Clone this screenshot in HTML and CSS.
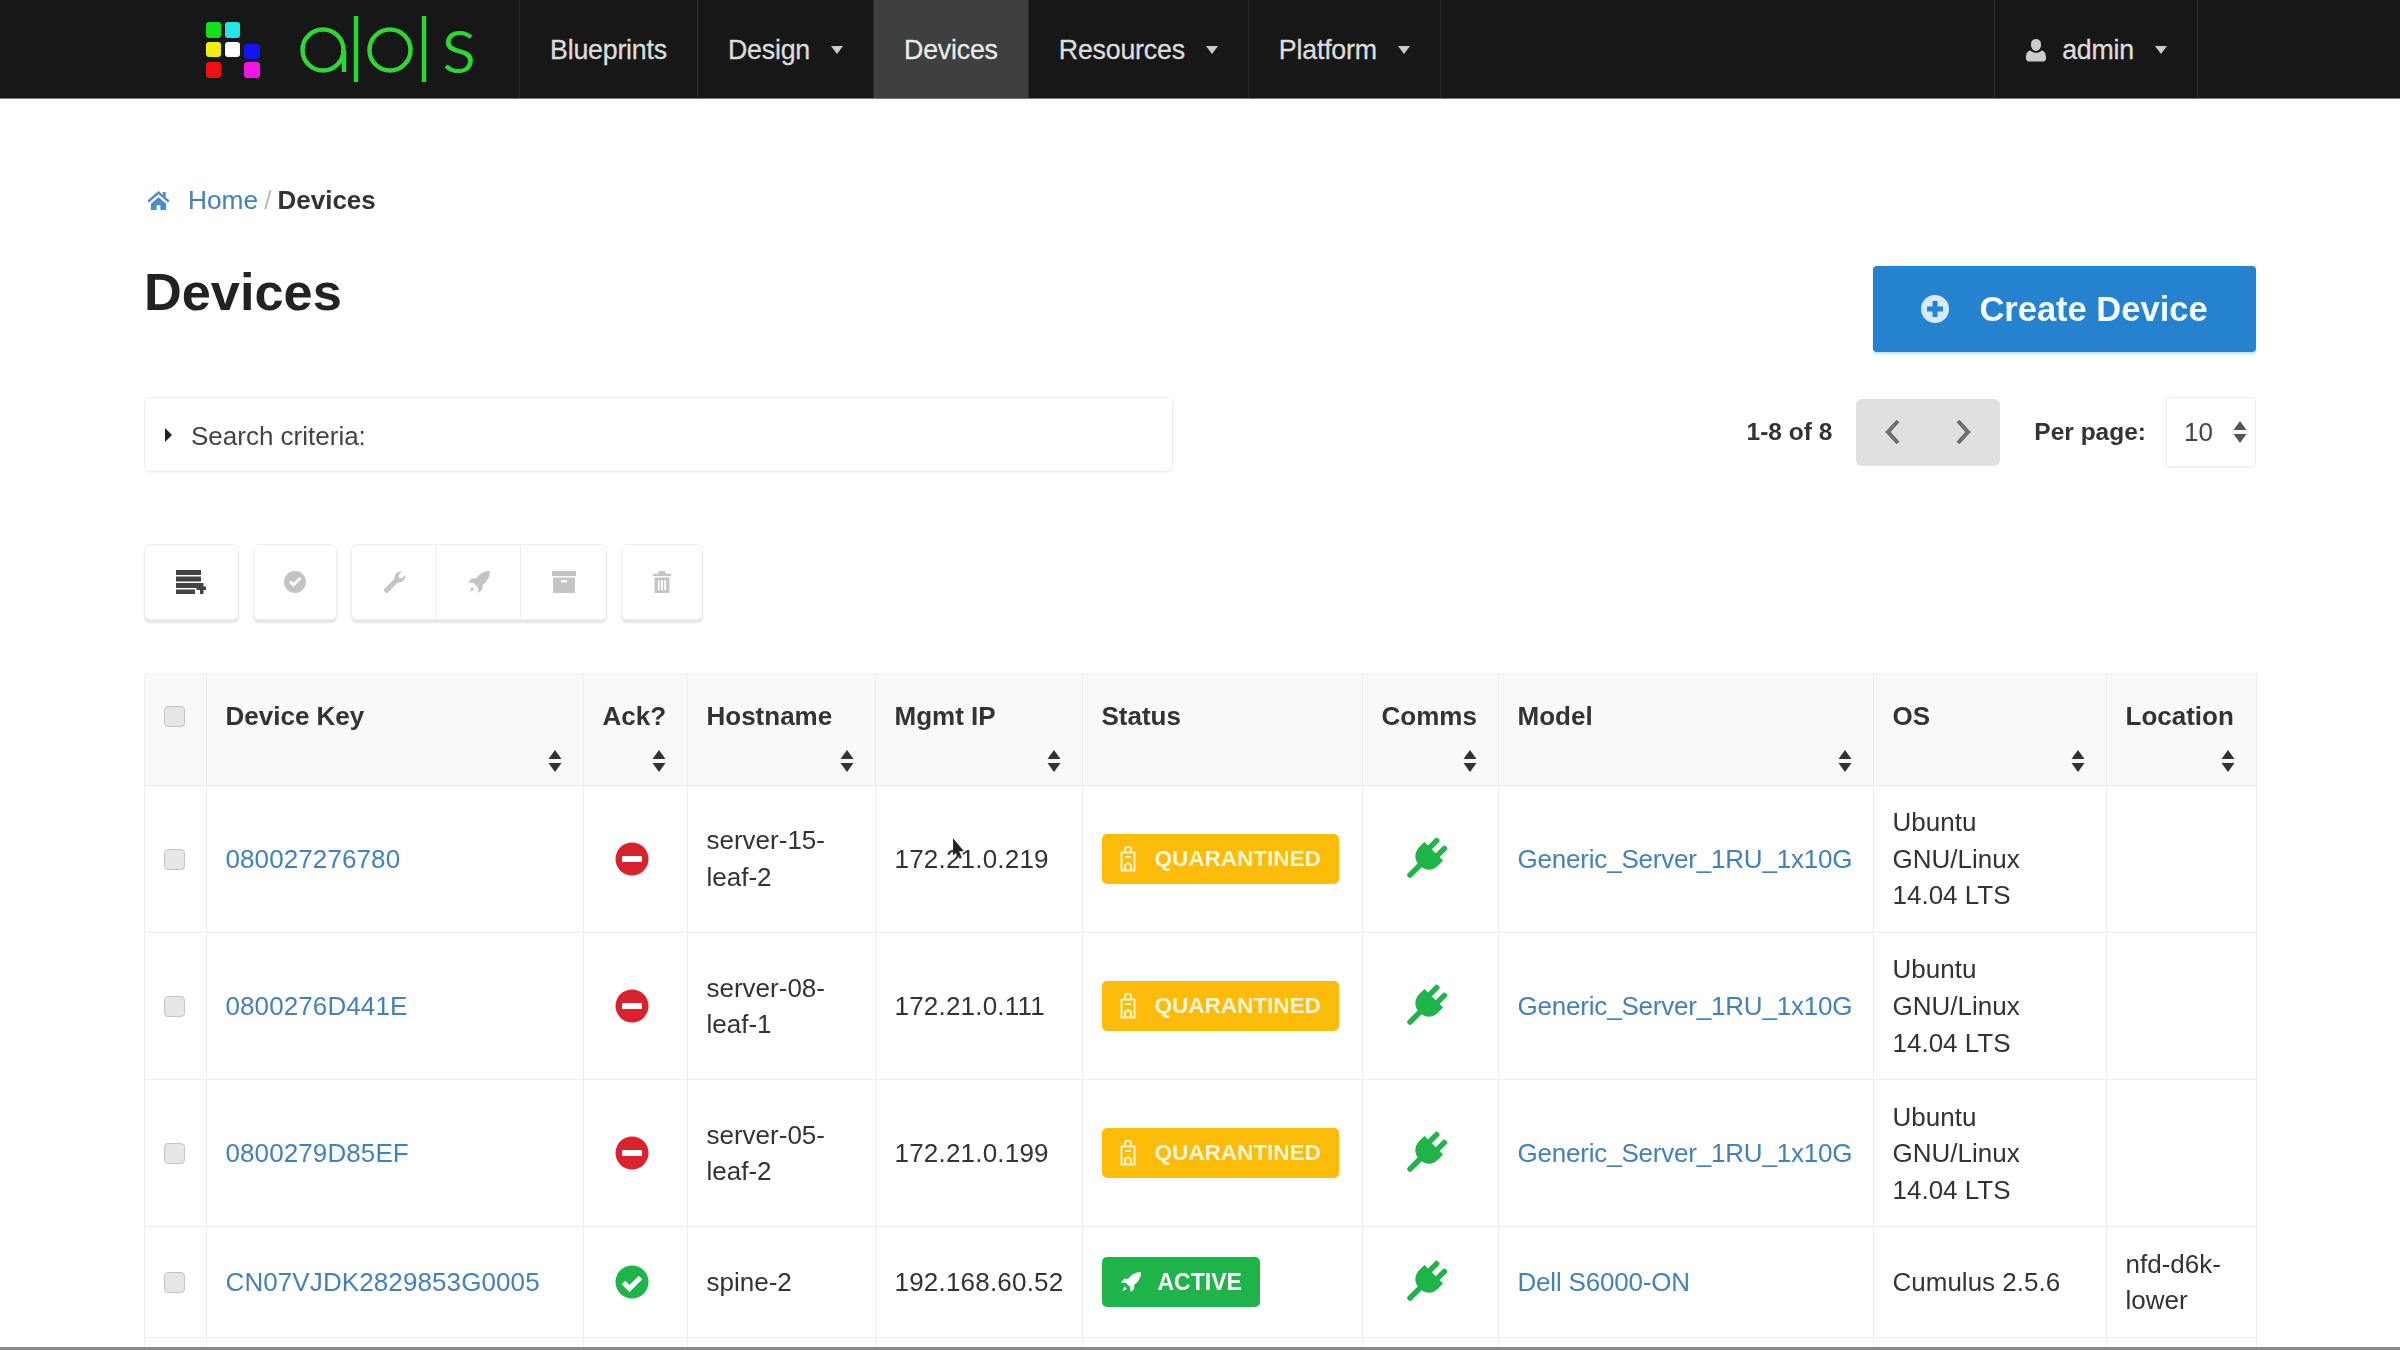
FILE: index.html
```html
<!DOCTYPE html>
<html lang="en">

<head>
  <meta charset="UTF-8">
  <title>Devices</title>
  <link rel="stylesheet" href="styles.css">
</head>

<body>
  <svg class="defs" width="0" height="0">
    <symbol id="i-sort" viewBox="0 0 14 22"><path d="M7 0l6.500 9H.5zM7 22L.5 13h13z"/></symbol>
    <symbol id="i-plug" viewBox="0 0 40 40">
      <g transform="rotate(45 20 20)">
        <rect x="12.500" y="-1" width="5" height="13" rx="2"/>
        <rect x="22.500" y="-1" width="5" height="13" rx="2"/>
        <path d="M8 10h24v6c0 7-4 11-9 12h-6c-5-1-9-5-9-12z"/>
        <rect x="17.500" y="26" width="5" height="17" rx="2"/>
      </g>
    </symbol>
    <symbol id="i-stop" viewBox="0 0 34 34">
      <circle cx="17" cy="17" r="16.500" fill="#d8232f"/>
      <rect x="7" y="14" width="20" height="6" rx="1" fill="#fff"/>
    </symbol>
    <symbol id="i-ok" viewBox="0 0 34 34">
      <circle cx="17" cy="17" r="16.500" fill="#1fb44a"/>
      <path d="M8.500 17.500l6 6 11-11" fill="none" stroke="#fff" stroke-width="5"/>
    </symbol>
    <symbol id="i-box" viewBox="0 0 16 26">
      <path d="M5 6V3.500a3 3 0 0 1 6 0V6M1.500 6.500h13v18h-13zM5 24v-5l3-2 3 2v5M5 11h6" fill="none" stroke="#fff4cf" stroke-width="2"/>
    </symbol>
    <symbol id="i-rocket" viewBox="0 0 24 24">
      <path d="M23 1c-6.500.2-11 3-14 7.500H4.500L1 12.500l5.500.5 4.500 4.500.5 5.500 4-3.500v-4.500C20 12 22.800 7.500 23 1zM5 17l2.500 2.500L2.500 22z"/>
    </symbol>
  </svg>

  <div class="screen">
    <nav class="navbar">
      <a class="logo">
        <svg width="240" height="98" viewBox="200 0 240 98">
          <rect x="206" y="22" width="15" height="16" rx="3" fill="#12e01a"/>
          <rect x="225" y="22" width="15" height="16" rx="3" fill="#22e6ea"/>
          <rect x="206" y="42" width="15" height="15" rx="3" fill="#f2ee10"/>
          <rect x="225" y="42" width="15" height="15" rx="3" fill="#fff"/>
          <rect x="244" y="44" width="16" height="15" rx="3" fill="#1414f0"/>
          <rect x="206" y="62" width="15" height="16" rx="3" fill="#f01010"/>
          <rect x="244" y="62" width="16" height="16" rx="3" fill="#ee18e0"/>
          <g fill="none" stroke="#2dd834" stroke-width="4.500">
            <circle cx="323" cy="50" r="20.500"/>
            <line x1="344" y1="50" x2="344" y2="72"/>
            <line x1="356" y1="16" x2="356" y2="82"/>
            <circle cx="390" cy="50" r="20.500"/>
            <line x1="424" y1="16" x2="424" y2="82"/>
          </g>
        </svg>
        <span class="logo-s">s</span>
      </a>
      <ul class="nav-list">
        <li class="nav-item">Blueprints</li>
        <li class="nav-item">Design<span class="caret"></span></li>
        <li class="nav-item active">Devices</li>
        <li class="nav-item">Resources<span class="caret"></span></li>
        <li class="nav-item">Platform<span class="caret"></span></li>
      </ul>
      <ul class="nav-list nav-right">
        <li class="nav-item">
          <svg class="user-icon" viewBox="0 0 24 26"><path d="M12 1c3.500 0 5.500 2.500 5.500 6s-2 7-5.500 7-5.500-3.500-5.500-7S8.500 1 12 1zM6 13.500c1.500 1.500 3.500 2.500 6 2.500s4.500-1 6-2.500c3.500.5 5 3.500 5 8.500 0 2-1.500 3.500-3 3.500H4c-1.500 0-3-1.500-3-3.500 0-5 1.500-8 5-8.500z"/></svg>
          admin<span class="caret"></span>
        </li>
      </ul>
    </nav>

    <main class="page">
      <div class="breadcrumb">
        <svg class="home-icon" viewBox="0 0 24 22"><path d="M12 1L.5 11l1.500 2L12 4.500 22 13l1.500-2L19.500 7.500V2h-3v3zM4 14.500L12 7.500l8 7V21h-6v-5h-4v5H4z"/></svg>
        <a class="link" href="#">Home</a>
        <span class="sep">/</span>
        <b>Devices</b>
      </div>

      <div class="title-row">
        <h1>Devices</h1>
        <button class="create-btn">
          <svg class="plus-icon" viewBox="0 0 28 28"><path fill-rule="evenodd" d="M14 0a14 14 0 1 1 0 28 14 14 0 0 1 0-28zM11.500 6v5.500H6v5h5.500V22h5v-5.500H22v-5h-5.500V6z"/></svg>
          Create Device
        </button>
      </div>

      <div class="filter-row">
        <div class="search-box"><span class="arrow-right"></span>Search criteria:</div>
        <div class="pager">
          <span class="pager-total">1-8 of 8</span>
          <div class="pager-btns">
            <svg class="chevron" viewBox="0 0 16 26"><path d="M13 2L3 13l10 11"/></svg>
            <svg class="chevron" viewBox="0 0 16 26"><path d="M3 2l10 11L3 24"/></svg>
          </div>
          <span class="pager-label">Per page:</span>
          <div class="per-page">10<svg class="sort sort-dark"><use href="#i-sort"/></svg></div>
        </div>
      </div>

      <div class="toolbar">
        <button class="tool-btn w95 on">
          <svg viewBox="0 0 30 24"><path d="M0 0h25v5H0zM0 6.500h25v5H0zM0 13h25v5H0zM0 19.500h19V24H0zM24 13h3.500v3.500H31V20h-3.500v4H24v-4h-3.500v-3.500H24z"/></svg>
        </button>
        <button class="tool-btn w84">
          <svg viewBox="0 0 24 24"><path fill-rule="evenodd" d="M12 1a11 11 0 1 1 0 22 11 11 0 0 1 0-22zM6 12.500l4.500 4.500L18.500 9l-2-2-6 6-2.500-2.500z"/></svg>
        </button>
        <div class="tool-group">
          <button class="tool-btn w85">
            <svg viewBox="0 0 24 24"><path d="M2.500 18.500l10-9.800C12 4.800 15 1 20 1.500L16.500 5l.5 2.800 2.800.5L23.300 5c.5 4.500-3 8-7.300 7.300L6 22.500c-2 2-5.500-2-3.500-4z"/></svg>
          </button>
          <button class="tool-btn w84">
            <svg><use href="#i-rocket"/></svg>
          </button>
          <button class="tool-btn w87">
            <svg viewBox="0 0 24 24"><path fill-rule="evenodd" d="M0 1h24v5H0zM1 7.500h22V23H1zM9 10v2.500h6V10z"/></svg>
          </button>
        </div>
        <button class="tool-btn w82">
          <svg viewBox="0 0 24 26"><path fill-rule="evenodd" d="M9 1h6l1.500 3H22v2.500H2V4h5.500zM4 8h16v17H4zM7.500 11v11h2V11zM11 11v11h2V11zM14.500 11v11h2V11z"/></svg>
        </button>
      </div>

      <table class="devices">
        <colgroup>
          <col class="c-check"><col class="c-key"><col class="c-ack"><col class="c-host"><col class="c-ip">
          <col class="c-status"><col class="c-comms"><col class="c-model"><col class="c-os"><col class="c-loc">
        </colgroup>
        <thead>
          <tr>
            <th class="check-cell"><span class="checkbox"></span></th>
            <th>Device Key<div class="sort-wrap"><svg class="sort"><use href="#i-sort"/></svg></div></th>
            <th>Ack?<div class="sort-wrap"><svg class="sort"><use href="#i-sort"/></svg></div></th>
            <th>Hostname<div class="sort-wrap"><svg class="sort"><use href="#i-sort"/></svg></div></th>
            <th>Mgmt IP<div class="sort-wrap"><svg class="sort"><use href="#i-sort"/></svg></div></th>
            <th>Status</th>
            <th>Comms<div class="sort-wrap"><svg class="sort"><use href="#i-sort"/></svg></div></th>
            <th>Model<div class="sort-wrap"><svg class="sort"><use href="#i-sort"/></svg></div></th>
            <th>OS<div class="sort-wrap"><svg class="sort"><use href="#i-sort"/></svg></div></th>
            <th>Location<div class="sort-wrap"><svg class="sort"><use href="#i-sort"/></svg></div></th>
          </tr>
        </thead>
        <tbody>
          <tr>
            <td class="check-cell"><span class="checkbox"></span></td>
            <td class="num"><a class="link" href="#">080027276780</a></td>
            <td class="ack-cell"><svg class="ack"><use href="#i-stop"/></svg></td>
            <td>server-15-leaf-2</td>
            <td class="num">172.21.0.219</td>
            <td><span class="badge quarantined"><svg class="badge-box"><use href="#i-box"/></svg>QUARANTINED</span></td>
            <td class="comms-cell"><svg class="plug"><use href="#i-plug"/></svg></td>
            <td class="model"><a class="link" href="#">Generic_Server_1RU_1x10G</a></td>
            <td>Ubuntu GNU/Linux 14.04 LTS</td>
            <td></td>
          </tr>
          <tr>
            <td class="check-cell"><span class="checkbox"></span></td>
            <td class="num"><a class="link" href="#">0800276D441E</a></td>
            <td class="ack-cell"><svg class="ack"><use href="#i-stop"/></svg></td>
            <td>server-08-leaf-1</td>
            <td class="num">172.21.0.111</td>
            <td><span class="badge quarantined"><svg class="badge-box"><use href="#i-box"/></svg>QUARANTINED</span></td>
            <td class="comms-cell"><svg class="plug"><use href="#i-plug"/></svg></td>
            <td class="model"><a class="link" href="#">Generic_Server_1RU_1x10G</a></td>
            <td>Ubuntu GNU/Linux 14.04 LTS</td>
            <td></td>
          </tr>
          <tr>
            <td class="check-cell"><span class="checkbox"></span></td>
            <td class="num"><a class="link" href="#">0800279D85EF</a></td>
            <td class="ack-cell"><svg class="ack"><use href="#i-stop"/></svg></td>
            <td>server-05-leaf-2</td>
            <td class="num">172.21.0.199</td>
            <td><span class="badge quarantined"><svg class="badge-box"><use href="#i-box"/></svg>QUARANTINED</span></td>
            <td class="comms-cell"><svg class="plug"><use href="#i-plug"/></svg></td>
            <td class="model"><a class="link" href="#">Generic_Server_1RU_1x10G</a></td>
            <td>Ubuntu GNU/Linux 14.04 LTS</td>
            <td></td>
          </tr>
          <tr>
            <td class="check-cell"><span class="checkbox"></span></td>
            <td class="num"><a class="link" href="#">CN07VJDK2829853G0005</a></td>
            <td class="ack-cell"><svg class="ack"><use href="#i-ok"/></svg></td>
            <td>spine-2</td>
            <td class="num">192.168.60.52</td>
            <td><span class="badge active-badge"><svg class="badge-rocket"><use href="#i-rocket"/></svg>ACTIVE</span></td>
            <td class="comms-cell"><svg class="plug"><use href="#i-plug"/></svg></td>
            <td class="model"><a class="link" href="#">Dell S6000-ON</a></td>
            <td>Cumulus 2.5.6</td>
            <td>nfd-d6k-lower</td>
          </tr>
          <tr class="next-row">
            <td></td><td></td><td></td><td></td><td></td><td></td><td></td><td></td><td></td><td></td>
          </tr>
        </tbody>
      </table>
    </main>

    <!-- mouse pointer caught in the capture -->
    <svg class="pointer" viewBox="0 0 12 20"><path d="M1 0l10 12H6.500l2.500 6-2 1-2.500-6L1 16z"/></svg>
    <div class="bottom-edge"></div>
  </div>
</body>

</html>
```
FILE: styles.css
```css
html,
body {
  margin: 0;
  padding: 0;
  height: 1350px;
  overflow: hidden;
  background: #fff;
}

body {
  font-family: "Liberation Sans", Arial, sans-serif;
  font-size: 26px;
  line-height: 36.6px;
  color: #333;
}

.defs {
  position: absolute;
}

/* the reference is a soft video frame */
.screen {
  position: relative;
  height: 1350px;
  overflow: hidden;
  filter: blur(0.7px);
}

.link {
  color: #4480ba;
  text-decoration: none;
}

/* navbar */
.navbar {
  display: flex;
  height: 98px;
  background: #171717;
  border-bottom: 1px solid #777;
}

.logo {
  display: flex;
  box-sizing: border-box;
  width: 319px;
  margin-left: 200px;
  height: 98px;
}

.logo-s {
  height: 82px;
  padding-left: 2px;
  font-family: Lato, sans-serif;
  font-weight: 300;
  font-size: 80px;
  line-height: 82px;
  color: #2dd834;
  -webkit-text-stroke: 1.2px #2dd834;
}

.nav-list {
  display: flex;
  margin: 0;
  padding: 0;
  list-style: none;
  border-left: 1px solid #2b2b2b;
}

.nav-right {
  margin-left: auto;
  margin-right: 202px;
}

.nav-item {
  display: flex;
  align-items: center;
  padding: 2px 30px 0;
  color: #ddd;
  font-size: 26.750px;
  letter-spacing: -0.2px;
  -webkit-text-stroke: 0.3px #ddd;
  border-right: 1px solid #2b2b2b;
}

.nav-item.active {
  background: #3e3f3f;
  color: #eee;
}

.caret {
  margin-left: 21px;
  border-top: 8px solid #ccc;
  border-left: 6px solid transparent;
  border-right: 6px solid transparent;
}

.user-icon {
  width: 22px;
  height: 24px;
  margin-right: 15px;
  fill: #ccc;
}

/* page */
.page {
  padding: 83px 144px 0;
}

.breadcrumb {
  display: flex;
  align-items: center;
  height: 36px;
  font-size: 26.300px;
}

.breadcrumb b {
  color: #333;
  font-size: 26px;
}

.home-icon {
  width: 23px;
  height: 21px;
  margin: 0 18px 0 3px;
  fill: #4a8bc9;
}

.sep {
  margin: 0 6px;
  color: #bbb;
}

.title-row {
  display: flex;
  justify-content: space-between;
  margin-top: 45px;
}

h1 {
  margin: 0;
  font-size: 52.300px;
  line-height: 58px;
  color: #222;
}

.create-btn {
  display: flex;
  align-items: center;
  justify-content: center;
  box-sizing: border-box;
  width: 383px;
  height: 86px;
  margin-top: 3px;
  padding: 0;
  border: none;
  border-radius: 4px;
  background: #2482cf;
  box-shadow: 0 2px 2px rgba(120, 200, 255, 0.5);
  color: #f4faff;
  font-family: inherit;
  font-size: 34.500px;
  font-weight: bold;
}

.plus-icon {
  width: 28px;
  height: 28px;
  margin-right: 30px;
  fill: #d5ebfb;
}

.filter-row {
  display: flex;
  justify-content: space-between;
  margin-top: 45px;
}

.search-box {
  display: flex;
  align-items: center;
  box-sizing: border-box;
  width: 1029px;
  height: 75px;
  padding: 4px 0 0 20px;
  border: 1px solid #eee;
  border-radius: 6px;
  box-shadow: 0 1px 2px rgba(0, 0, 0, 0.04);
  color: #444;
}

.arrow-right {
  margin: -4px 19px 0 0;
  border-left: 7px solid #222;
  border-top: 7px solid transparent;
  border-bottom: 7px solid transparent;
}

.pager {
  display: flex;
  align-items: center;
  height: 70px;
  font-size: 24.500px;
  font-weight: bold;
}

.pager-btns {
  display: flex;
  justify-content: space-between;
  align-items: center;
  box-sizing: border-box;
  width: 144px;
  height: 67px;
  margin: 0 34px 0 24px;
  padding: 0 29px;
  border-radius: 6px;
  background: #dfe0e0;
}

.chevron {
  width: 16px;
  height: 26px;
  fill: none;
  stroke: #6e6e6e;
  stroke-width: 4;
}

.per-page {
  display: flex;
  align-items: center;
  justify-content: space-between;
  box-sizing: border-box;
  width: 90px;
  height: 70px;
  margin-left: 20px;
  padding: 0 8px 0 17px;
  border: 1px solid #eee;
  border-radius: 4px;
  box-shadow: 0 1px 2px rgba(0, 0, 0, 0.06);
  font-size: 26px;
  font-weight: normal;
  color: #444;
}

.toolbar {
  display: flex;
  gap: 14px;
  margin-top: 72px;
}

.tool-group {
  display: flex;
  border-radius: 6px;
  box-shadow: 0 3px 2px rgba(0, 0, 0, 0.1);
}

.tool-btn {
  display: flex;
  align-items: center;
  justify-content: center;
  box-sizing: border-box;
  height: 76px;
  padding: 0;
  background: #fff;
  border: 1px solid #eee;
  border-radius: 6px;
  box-shadow: 0 3px 2px rgba(0, 0, 0, 0.1);
  fill: #c4c4c4;
}

.tool-btn svg {
  width: 24px;
  height: 24px;
}

.tool-btn.on {
  fill: #444;
}

.tool-btn.on svg {
  width: 30px;
  margin-right: 2px;
}

.tool-group .tool-btn {
  box-shadow: none;
  border-radius: 0;
  border-right: none;
}

.tool-group .tool-btn:first-child {
  border-radius: 6px 0 0 6px;
}

.tool-group .tool-btn:last-child {
  border-radius: 0 6px 6px 0;
  border-right: 1px solid #eee;
}

.w95 { width: 95px; }
.w82 { width: 82px; }
.w84 { width: 84px; }
.w85 { width: 85px; }
.w87 { width: 87px; }

/* table */
.devices {
  width: 2112px;
  margin-top: 53px;
  border-collapse: collapse;
  table-layout: fixed;
}

.c-check { width: 62px; }
.c-key { width: 377px; }
.c-ack { width: 104px; }
.c-host { width: 188px; }
.c-ip { width: 207px; }
.c-status { width: 280px; }
.c-comms { width: 136px; }
.c-model { width: 375px; }
.c-os { width: 233px; }
.c-loc { width: 150px; }

.devices th,
.devices td {
  padding: 18.200px 18px 18.200px 18.500px;
  border: 1px solid #eee;
  text-align: left;
  font-weight: normal;
}

.devices th {
  padding-top: 24px;
  padding-bottom: 13px;
  vertical-align: top;
  background: #f8f9f9;
  font-weight: bold;
  line-height: 36px;
  color: #333;
  white-space: nowrap;
}

.devices thead tr:first-child th {
  border-top-color: #f2f2f2;
}

.devices th.check-cell {
  padding-top: 32px;
}

.devices td.num {
  letter-spacing: 0.2px;
}

.devices td.num .link {
  letter-spacing: 0.1px;
}

.devices td.model {
  letter-spacing: -0.2px;
}

.sort-wrap {
  display: flex;
  justify-content: flex-end;
  height: 22px;
  margin: 16px 3px 0 0;
}

.sort {
  width: 14px;
  height: 22px;
  fill: #333;
}

.sort-dark {
  fill: #555;
}

.checkbox {
  display: block;
  box-sizing: border-box;
  width: 21px;
  height: 21px;
  border: 1px solid #c4c4c4;
  border-radius: 4px;
  background: #e6e6e6;
}

.check-cell {
  vertical-align: middle;
}

.devices td.ack-cell {
  padding-left: 31px;
}

.ack {
  display: block;
  width: 34px;
  height: 34px;
}

.devices td.comms-cell {
  padding-left: 41px;
}

.plug {
  display: block;
  width: 44px;
  height: 44px;
  fill: #1fb44a;
}

.badge {
  display: inline-flex;
  align-items: center;
  box-sizing: border-box;
  height: 50px;
  padding: 0 18px;
  border-radius: 5px;
  color: #fff;
  font-size: 23px;
  font-weight: bold;
  vertical-align: middle;
}

.quarantined {
  background: #fdbb0a;
  color: #fff6d8;
  font-size: 22.500px;
}

.active-badge {
  background: #1fb44a;
}

.badge-box {
  width: 16px;
  height: 26px;
  margin-right: 19px;
}

.badge-rocket {
  width: 22px;
  height: 22px;
  margin-right: 16px;
  fill: #fff;
}

.next-row td {
  height: 20px;
  padding: 0;
}

.pointer {
  position: absolute;
  left: 952px;
  top: 838px;
  width: 13px;
  height: 22px;
  fill: #222;
}

.bottom-edge {
  position: absolute;
  left: 0;
  right: 0;
  bottom: 0;
  height: 3px;
  background: #8a8a8a;
}
```
